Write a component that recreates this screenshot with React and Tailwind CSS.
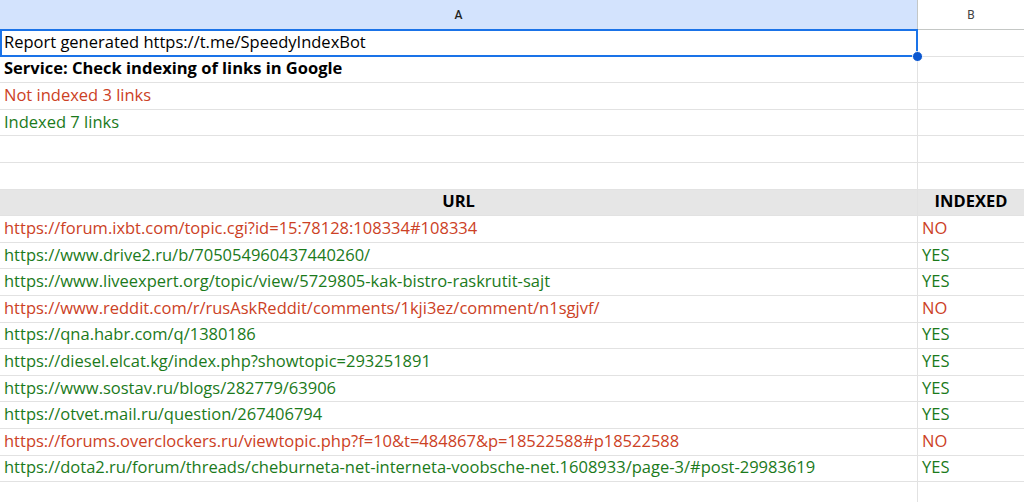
const rows=[
["https://forum.ixbt.com/topic.cgi?id=15:78128:108334#108334",0],
["https://www.drive2.ru/b/705054960437440260/",1],
["https://www.liveexpert.org/topic/view/5729805-kak-bistro-raskrutit-sajt",1],
["https://www.reddit.com/r/rusAskReddit/comments/1kji3ez/comment/n1sgjvf/",0],
["https://qna.habr.com/q/1380186",1],
["https://diesel.elcat.kg/index.php?showtopic=293251891",1],
["https://www.sostav.ru/blogs/282779/63906",1],
["https://otvet.mail.ru/question/267406794",1],
["https://forums.overclockers.ru/viewtopic.php?f=10&t=484867&p=18522588#p18522588",0],
["https://dota2.ru/forum/threads/cheburneta-net-interneta-voobsche-net.1608933/page-3/#post-29983619",1],
];
const R="text-[#cc4125]",G="text-[#1b7a1b]";
function Row({a,b,bg="",cls="",bcls=""}){return(
<div className={`flex h-[26.6px] border-b border-[#e2e2e2] ${bg}`}>
<div className={`w-[918px] shrink-0 border-r border-[#e2e2e2] px-[4px] flex items-end pb-[1px] whitespace-nowrap ${cls}`}>{a}</div>
<div className={`flex-1 px-[4px] flex items-end pb-[1px] ${bcls}`}>{b}</div>
</div>)}
export default function App(){return(
<div className="w-[1024px] h-[502px] overflow-hidden bg-white text-[16.5px] text-black" style={{fontFamily:'"Open Sans", sans-serif'}}>
<div className="flex h-[30px] border-b border-[#c4c7c5] text-[12px] text-[#444]" style={{fontFamily:'Roboto, sans-serif'}}>
<div className="w-[918px] shrink-0 bg-[#d3e3fd] border-r border-[#c4c7c5] flex items-center justify-center font-medium text-[#1f1f1f]">A</div>
<div className="flex-1 flex items-center justify-center">B</div>
</div>
<div className="relative">
<div className="absolute left-0 top-[-1px] w-[918px] h-[28px] border-2 border-[#1a73e8] pointer-events-none"></div>
<div className="absolute left-[912px] top-[21px] w-[11px] h-[11px] rounded-full bg-[#0b57d0] border border-white"></div>
<Row a="Report generated https://t.me/SpeedyIndexBot"/>
<Row a="Service: Check indexing of links in Google" cls="font-bold"/>
<Row a="Not indexed 3 links" cls={R}/>
<Row a="Indexed 7 links" cls={G}/>
<Row a=""/>
<Row a=""/>
<Row a="URL" b="INDEXED" bg="bg-[#e6e6e6]" cls="justify-center font-bold" bcls="justify-center font-bold"/>
{rows.map(([u,y],i)=><Row key={i} a={u} b={y?"YES":"NO"} cls={y?G:R} bcls={y?G:R}/>)}
<Row a=""/>
</div>
</div>)}
